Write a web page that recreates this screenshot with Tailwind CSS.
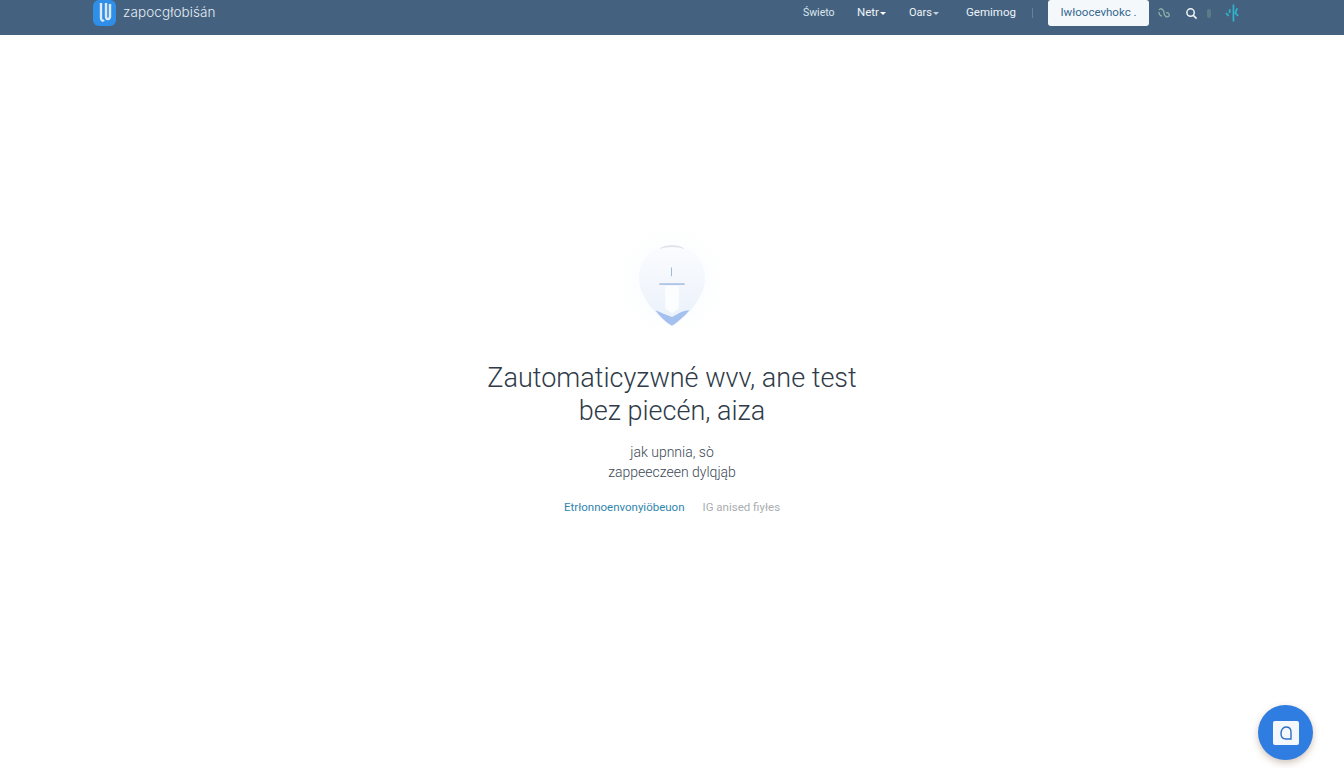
<!DOCTYPE html>
<html lang="pl">
  <head>
    <meta charset="UTF-8" />
    <meta name="viewport" content="width=device-width, initial-scale=1.0" />
    <title>zapoczątkowanie</title>
    <script src="https://cdn.jsdelivr.net/npm/@tailwindcss/browser@4"></script>
  </head>
  <body class="relative h-[768px] w-[1344px] overflow-hidden bg-white font-['Roboto',sans-serif]">
    <header class="relative flex h-[35px] items-start justify-between bg-[#44627f] pl-[93px] pr-[103px]">
      <div class="flex h-[26px] items-center gap-[7px]">
        <svg class="h-[26px] w-[23px]" viewBox="0 0 23 26">
          <rect width="23" height="26" rx="6" fill="#2f8fe8" />
          <path d="M8 3v15c0 3 2 3 3 2M13 3v13c0 4 3 4 4 1V4" fill="none" stroke="#dce9f4" stroke-width="2.400" />
        </svg>
        <span class="font-['Inter',sans-serif] text-[13.500px] leading-none font-light tracking-[0.1px] text-[#e6edf3]">zapocgłobiśán</span>
      </div>
      <nav class="flex h-[26px] items-center text-[11.500px] text-[#eef3f7]">
        <span class="w-[30px] text-[10.500px] whitespace-nowrap text-[#dce6ee]">Świeto</span>
        <span class="ml-[24px] flex w-[28px] items-center gap-[1px]">Netr<i class="h-0 w-0 border-x-[3px] border-t-[3px] border-x-transparent border-t-white"></i></span>
        <span class="ml-[24px] flex w-[32px] items-center gap-[1px] text-[11px]">Oars<i class="h-0 w-0 border-x-[3px] border-t-[3px] border-x-transparent border-t-white/70"></i></span>
        <span class="ml-[25px] w-[50px]">Gemimog</span>
        <span class="ml-[16px] h-[10px] w-px bg-white/20"></span>
        <button class="ml-[15px] h-[26px] w-[101px] rounded-[3px] bg-[#f5f8fb] text-center text-[11.500px] text-[#33688f]">Iwłoocevhokc .</button>
        <svg class="ml-[8px] h-[14px] w-[14px]" viewBox="0 0 14 14" fill="none" stroke="#8fb2a8" stroke-width="1.300">
          <path d="M2 4c2-3 5 0 5 3s3 5 5 3c1-2-1-4-3-3M5 10C3 10 2 8 2 6" />
        </svg>
        <svg class="ml-[14px] h-[13px] w-[13px]" viewBox="0 0 14 14" fill="none" stroke="#f2f5f7" stroke-width="1.600">
          <circle cx="6" cy="6" r="4" />
          <path d="M9 9l3.500 3.500" />
        </svg>
        <span class="ml-[9px] h-[9px] w-[4px] rounded-full bg-[#5c7a88]"></span>
        <svg class="ml-[13px] h-[20px] w-[17px]" viewBox="0 0 18 20" fill="none" stroke="#2fb5c9" stroke-width="1.800">
          <path d="M10 1v18M6 6v4M2 10l3 3M14 5l-2 5 3 3" />
        </svg>
      </nav>
    </header>

    <main class="flex flex-col items-center">
      <div class="mt-[191px] flex h-[110px] w-[110px] items-center justify-center rounded-full bg-[radial-gradient(circle,#f7fafd_0%,#ffffff_70%)]">
        <svg class="mt-[8px] h-[85px] w-[70px]" viewBox="0 0 72 85">
          <defs>
            <linearGradient id="drop" x1="0" y1="0" x2="0" y2="1">
              <stop offset="0" stop-color="#fbfcfe" />
              <stop offset="1" stop-color="#eaf1fb" />
            </linearGradient>
          </defs>
          <path d="M36 1C54 1 70 13 70 35 70 55 50 76 36 84 22 76 2 55 2 35 2 13 18 1 36 1Z" fill="url(#drop)" />
          <path d="M36 1c5 0 10 1 13 4-4-1-8-2-13-2S27 4 23 5C26 2 31 1 36 1Z" fill="#e2dfea" />
          <path d="M19 68c3 1 5 2 7 3l10 4 9-5c3-1 6-2 9-2C48 75 42 80 36 84 29 80 24 75 19 68Z" fill="#a3c0ee" />
          <path d="M29 43h14v23l-7 5-7-5Z" fill="#fbfdff" />
          <path d="M35.500 24v9" stroke="#9db8d3" stroke-width="1" />
          <path d="M23 41h26" stroke="#88a9d6" stroke-width="1.200" />
        </svg>
      </div>
      <h1 class="mt-[26px] w-[420px] text-center text-[27px] leading-[33px] font-light text-[#2f3b48]">Zautomaticyzwné wvv, ane test<br />bez piecén, aiza</h1>
      <p class="mt-[14px] text-center text-[14px] leading-[20px] font-light text-[#3c4854]">jak upnnia, sò<br />zappeeczeen dylqjąb</p>
      <div class="mt-[18px] flex gap-[18px] text-[11.500px] leading-[14px]">
        <a class="text-[#2f86ad]">Etrłonnoenvonyiöbeuon</a>
        <a class="text-[#a9adb1]">IG anised fiyłes</a>
      </div>
    </main>

    <button class="absolute top-[705px] left-[1258px] flex h-[55px] w-[55px] items-center justify-center rounded-full bg-[#2f7de0] shadow-[0_3px_7px_rgba(120,90,60,0.35)]">
      <span class="flex h-[24px] w-[26px] items-center justify-center rounded-[2px] bg-[#f4f8fd]">
        <svg class="h-[16px] w-[14px]" viewBox="0 0 14 16" fill="none" stroke="#2f6fc4" stroke-width="1.400">
          <path d="M7 2C4 2 2 5 2 8.500S4 14 7 14h5V7c0-3-2-5-5-5Z" />
        </svg>
      </span>
    </button>
  </body>
</html>
